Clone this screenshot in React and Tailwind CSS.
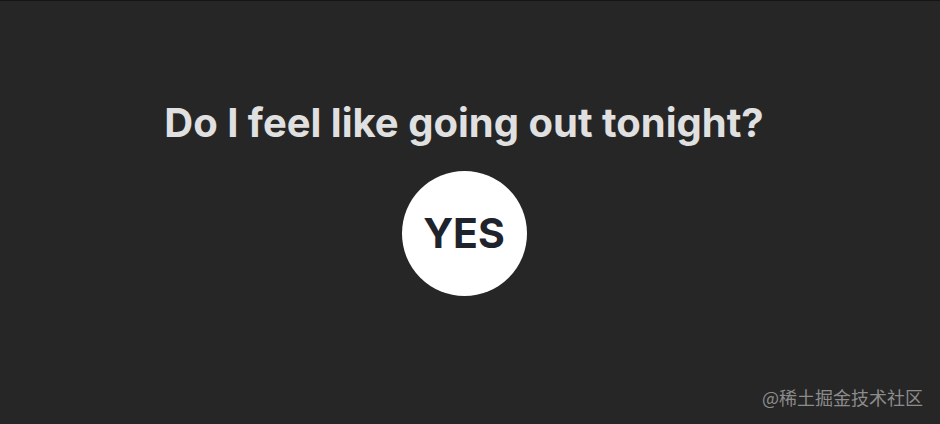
import React from "react";

const App = () => {
  return (
    <div className="relative w-[940px] h-[424px] bg-[#262626] border-t border-[#151515] overflow-hidden font-['Inter',sans-serif]">
      <div className="flex flex-col items-center pr-3 pt-[94px]">
        <h1 className="text-[40px] leading-[56px] font-bold text-[#e0e0e0]">
          Do I feel like going out tonight?
        </h1>
        <button className="mt-[20px] w-[125px] h-[125px] rounded-full bg-white flex items-center justify-center text-[41px] font-bold text-[#1f232c]">
          YES
        </button>
      </div>
      <span className="absolute right-[17px] bottom-[13px] text-[18px] text-[#8c8c8c] font-['Noto_Sans_CJK_SC',sans-serif]">
        @稀土掘金技术社区
      </span>
    </div>
  );
};

export default App;
